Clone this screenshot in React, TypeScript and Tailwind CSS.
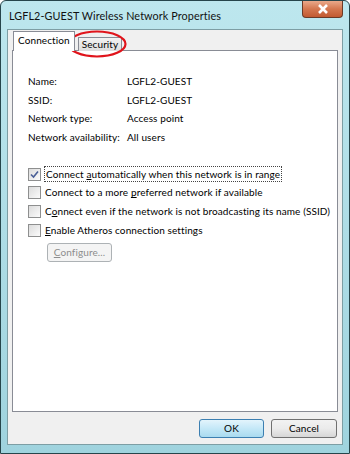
import React from 'react'

const font = { fontFamily: 'Lato, "Liberation Sans", sans-serif' }

function Check({ checked }: { checked?: boolean }) {
  return (
    <span className="flex h-[13px] w-[13px] shrink-0 items-center justify-center border border-[#8e8f8f] bg-gradient-to-br from-[#dcdcdc] to-[#fbfbfb]">
      {checked && (
        <svg width="9" height="9" viewBox="0 0 9 9">
          <path d="M1 4.5 L3.5 7 L8 1.5" fill="none" stroke="#4a5f97" strokeWidth="1.6" />
        </svg>
      )}
    </span>
  )
}

function Row({ label, value }: { label: string; value: string }) {
  return (
    <div className="flex h-[18.7px] items-center whitespace-nowrap">
      <span className="w-[99px]">{label}</span>
      <span>{value}</span>
    </div>
  )
}

export default function App() {
  return (
    <div
      className="flex h-[454px] w-[350px] flex-col overflow-hidden rounded-t-[6px] border border-[#26454b] bg-gradient-to-b from-[#bde7ee] via-[#aedde6] to-[#9fd3de] text-[10px] tracking-[0.1px] text-black"
      style={font}
    >
      {/* title bar */}
      <div className="flex h-[28px] shrink-0 items-start justify-between">
        <span className="whitespace-nowrap pl-[8px] pt-[7px] text-[10.8px] leading-[16px] text-[#111]">
          LGFL2-GUEST Wireless Network Properties
        </span>
        <button className="mr-[6px] flex h-[17px] w-[41px] items-center justify-center rounded-b-[4px] border border-t-0 border-[#6b3a26] bg-gradient-to-b from-[#e9a98a] via-[#d4774f] to-[#c25a31]">
          <svg width="12" height="10" viewBox="0 0 12 10">
            <path d="M2 1 L10 9 M10 1 L2 9" stroke="#fff" strokeWidth="2.6" />
          </svg>
        </button>
      </div>

      {/* client area */}
      <div className="mx-[6px] flex flex-1 flex-col border border-[#7d9ea4] bg-[#f0f0f0] px-[4px] pb-[6px] pt-[1px]">
        {/* tabs */}
        <div className="relative flex h-[20px] items-end whitespace-nowrap pl-[1px]">
          <div className="z-10 flex h-[20px] items-center border border-b-0 border-[#898c95] bg-white px-[4px] pb-[2px]">
            Connection
          </div>
          <div className="ml-[3px] flex h-[14px] items-center border border-b-0 border-[#898c95] bg-gradient-to-b from-[#f2f2f2] to-[#dedede] px-[3px]">
            Security
          </div>
          <svg className="absolute left-[55px] top-[-1px]" width="60" height="28" viewBox="0 0 60 28">
            <ellipse cx="30" cy="14" rx="28.5" ry="12.5" fill="none" stroke="#e0141b" strokeWidth="2.2" />
          </svg>
        </div>

        {/* tab panel */}
        <div className="-mt-px flex flex-1 flex-col border border-[#898c95] bg-white pl-[15px] pt-[21px]">
          <Row label="Name:" value="LGFL2-GUEST" />
          <Row label="SSID:" value="LGFL2-GUEST" />
          <Row label="Network type:" value="Access point" />
          <Row label="Network availability:" value="All users" />

          <div className="mt-[18px] flex flex-col whitespace-nowrap">
            <label className="flex h-[18.7px] items-center gap-[3px]">
              <Check checked />
              <span className="border border-dotted border-[#444] px-px leading-[14px]">
                Connect <span className="underline">a</span>utomatically when this network is in range
              </span>
            </label>
            <label className="flex h-[18.7px] items-center gap-[4px]">
              <Check />
              <span>
                Connect to a more <span className="underline">p</span>referred network if available
              </span>
            </label>
            <label className="flex h-[18.7px] items-center gap-[4px]">
              <Check />
              <span>
                C<span className="underline">o</span>nnect even if the network is not broadcasting its name (SSID)
              </span>
            </label>
            <label className="flex h-[18.7px] items-center gap-[4px]">
              <Check />
              <span>
                <span className="underline">E</span>nable Atheros connection settings
              </span>
            </label>
            <div className="ml-[19px] mt-[3px]">
              <button className="h-[19px] w-[65px] rounded-[3px] border border-[#adb2b5] bg-[#f4f4f4] text-[#8d8d8d]">
                <span className="underline">C</span>onfigure...
              </button>
            </div>
          </div>
        </div>

        {/* buttons */}
        <div className="mt-[7px] flex justify-end gap-[7px] pr-[1px]">
          <button className="h-[19px] w-[65px] rounded-[3px] border border-[#3c7fb1] bg-gradient-to-b from-[#e3f4fc] via-[#c4e8f7] to-[#a9daef]">
            OK
          </button>
          <button className="h-[19px] w-[66px] rounded-[3px] border border-[#707070] bg-gradient-to-b from-[#f2f2f2] via-[#ebebeb] to-[#d6d6d6]">
            Cancel
          </button>
        </div>
      </div>
      <div className="h-[8px] shrink-0" />
    </div>
  )
}
